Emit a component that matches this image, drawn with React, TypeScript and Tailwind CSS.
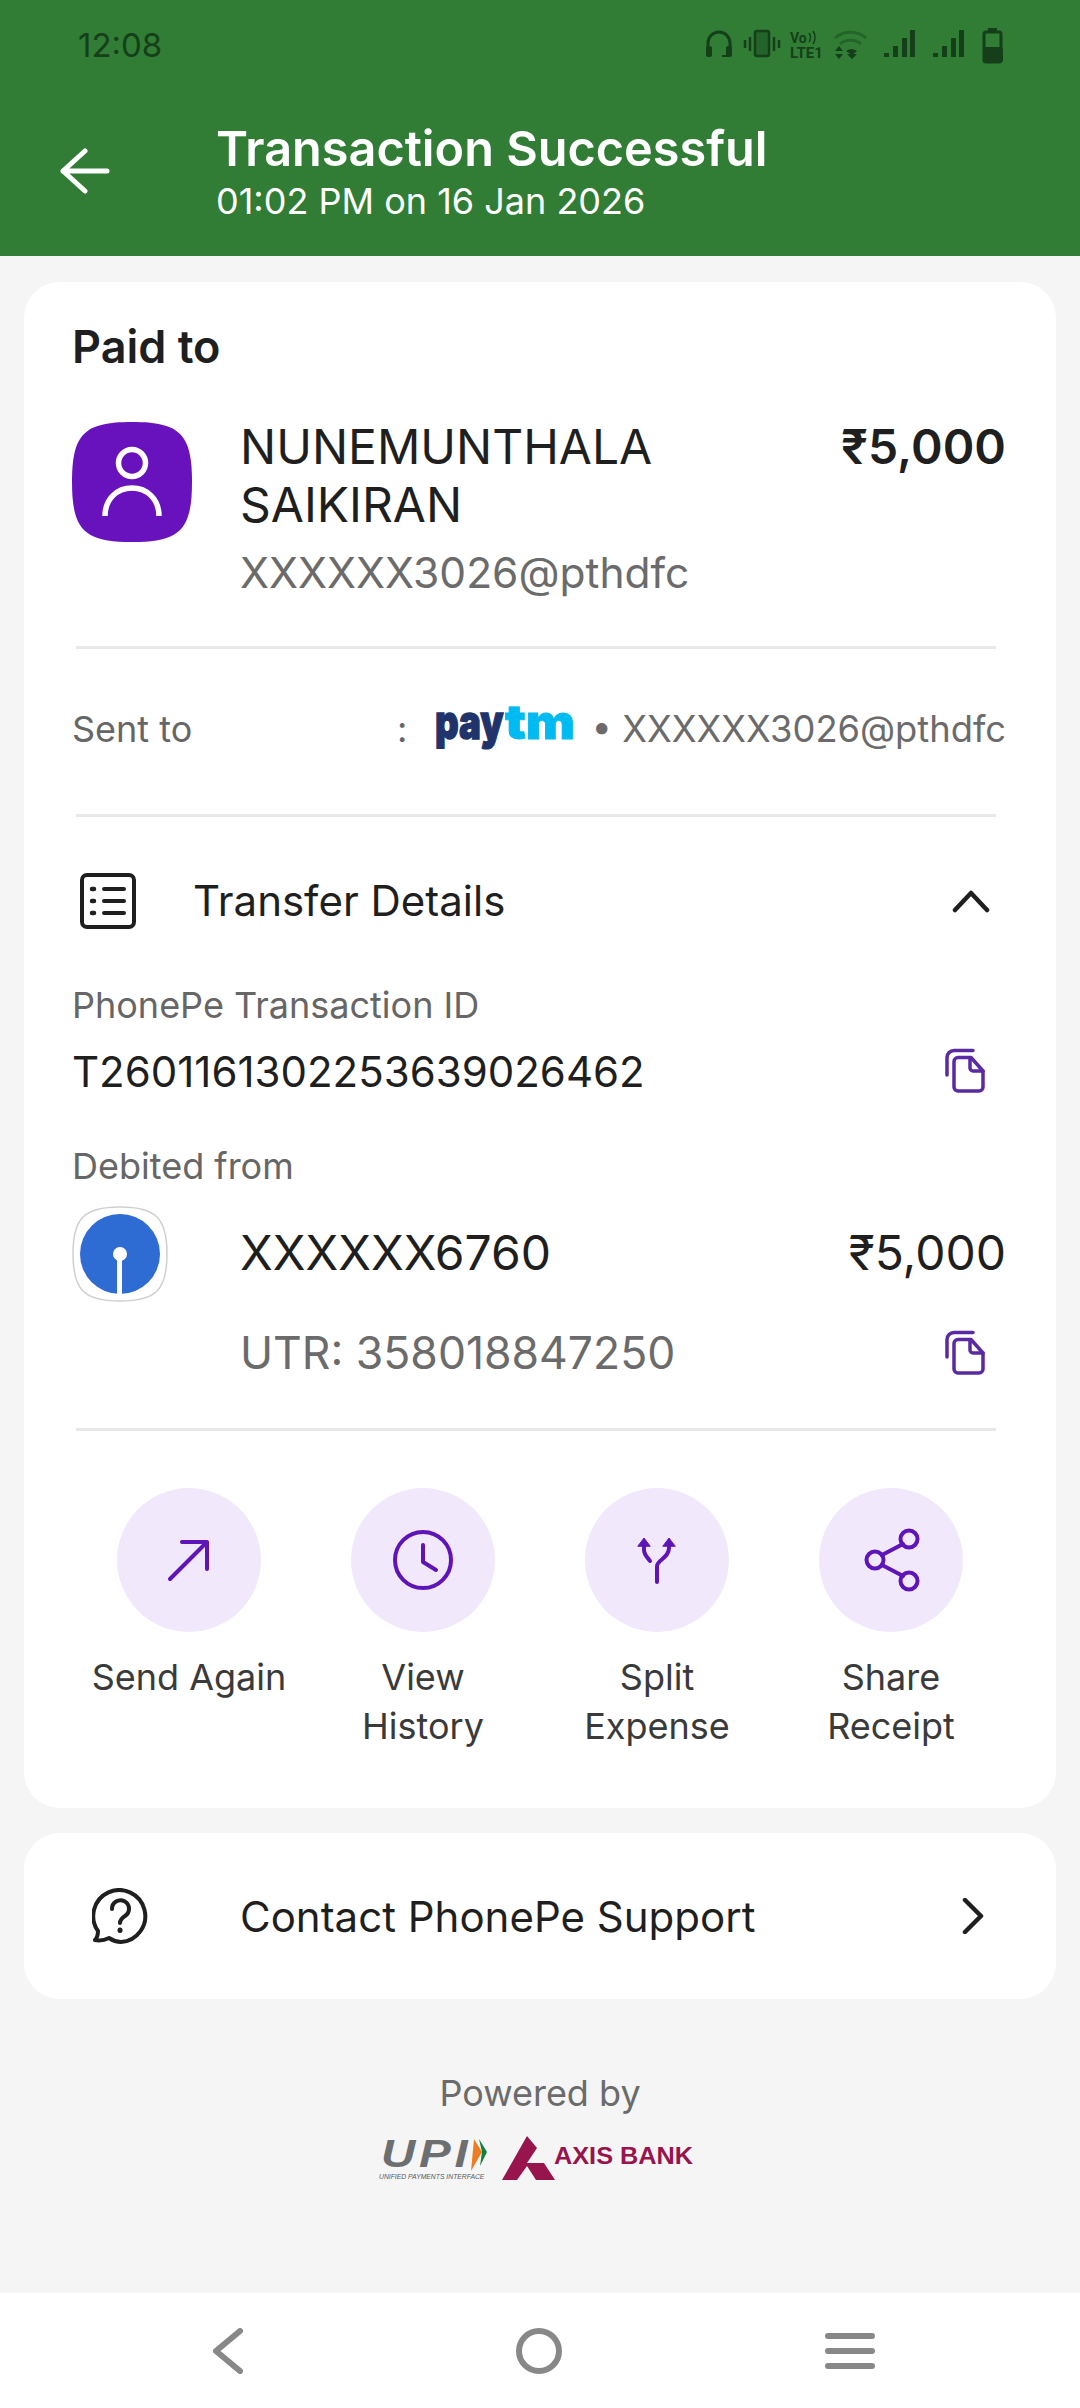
import React from 'react';

const PURPLE = '#5f14b8';

function StatusIcons() {
  return (
    <svg width="300" height="40" viewBox="0 0 300 40" fill="none">
      {/* headset */}
      <path d="M3 24V17a11 11 0 0 1 22 0v7" stroke="#153f18" strokeWidth="3" />
      <rect x="1" y="20" width="6" height="11" rx="2" fill="#153f18" />
      <rect x="21" y="20" width="6" height="11" rx="2" fill="#153f18" />
      <path d="M17 30h6" stroke="#153f18" strokeWidth="2" />
      {/* vibrate */}
      <rect x="50" y="5" width="14" height="25" rx="2" stroke="#153f18" strokeWidth="2.5" fill="#24632a" />
      <path d="M45 11v14M69 11v14M40 14v8M74 14v8" stroke="#153f18" strokeWidth="2.5" />
      {/* volte */}
      <text x="85" y="17" fontFamily="Roboto, sans-serif" fontWeight="700" fontSize="14" fill="#153f18">Vo</text>
      <path d="M104 7a8 8 0 0 1 0 9M108 5a12 12 0 0 1 0 13" stroke="#153f18" strokeWidth="1.5" />
      <text x="85" y="32" fontFamily="Roboto, sans-serif" fontWeight="700" fontSize="15" fill="#153f18">LTE1</text>
      {/* wifi */}
      <path d="M130 12a24 24 0 0 1 31 0" stroke="#24632a" strokeWidth="3" />
      <path d="M135 18a17 17 0 0 1 21 0" stroke="#24632a" strokeWidth="3" />
      <path d="M141 25a9 9 0 0 1 11 0l-5 4z" fill="#153f18" />
      <path d="M130 25l4-5 4 5zM130 28l4 5 4-5zM142 28h10l-5 5z" fill="#153f18" />
      {/* signal */}
      <g fill="#153f18">
        <rect x="179" y="27" width="5" height="4" />
        <rect x="188" y="20" width="5" height="11" />
        <rect x="197" y="12" width="5" height="19" />
        <rect x="205" y="4" width="5" height="27" />
        <rect x="228" y="27" width="5" height="4" />
        <rect x="237" y="20" width="5" height="11" />
        <rect x="246" y="12" width="5" height="19" />
        <rect x="254" y="4" width="5" height="27" />
      </g>
      {/* battery */}
      <rect x="283" y="2" width="9" height="4" fill="#153f18" />
      <rect x="279" y="6" width="17" height="30" rx="2" stroke="#153f18" strokeWidth="3" fill="none" />
      <rect x="278" y="21" width="20" height="15" rx="2" fill="#153f18" />
    </svg>
  );
}

function Divider() {
  return <div className="h-[3px] ml-[4px] mr-[10px] bg-[#e8e8e8]" />;
}

function CopyIcon() {
  return (
    <svg width="42" height="46" viewBox="0 0 42 46" fill="none" stroke="#5a2aa3" strokeWidth="3.5" strokeLinecap="round" strokeLinejoin="round">
      <path d="M29 2.5H10a7 7 0 0 0-7 7V27" />
      <path d="M14 9.5h13L39 23v16a4 4 0 0 1-4 4H14a4 4 0 0 1-4-4V13.5a4 4 0 0 1 4-4z" />
      <path d="M26 10v10a3 3 0 0 0 3 3h10" />
    </svg>
  );
}

function ActionButton({ lines, children }: { lines: string[]; children: React.ReactNode }) {
  return (
    <div className="flex flex-col items-center">
      <div className="w-[144px] h-[144px] rounded-full bg-[#f2e8fb] flex items-center justify-center">
        <svg width="72" height="72" viewBox="-36 -36 72 72" fill="none" stroke={PURPLE} strokeWidth="4" strokeLinecap="round" strokeLinejoin="round">
          {children}
        </svg>
      </div>
      <div className="mt-[21px] text-[36px] leading-[49px] text-[#3a3a3a] text-center">
        {lines.map((l) => (
          <div key={l}>{l}</div>
        ))}
      </div>
    </div>
  );
}

function PaytmLogo() {
  return (
    <svg width="140" height="46" viewBox="0 0 140 46" className="ml-[28px] overflow-visible">
      <text transform="translate(0 33) scale(1.02 1.32)" fontFamily="Inter, sans-serif" fontWeight="900" fontSize="36" stroke="#20336b" strokeWidth="1" fill="#20336b">
        pay
      </text>
      <text transform="translate(70 33) scale(1.45 1.32)" fontFamily="Inter, sans-serif" fontWeight="900" fontSize="36" stroke="#00baf2" strokeWidth="0.6" fill="#00baf2">
        tm
      </text>
    </svg>
  );
}

function PartnerLogos() {
  return (
    <svg width="320" height="54" viewBox="0 0 320 54" className="mt-[16px] mr-[6px] overflow-visible">
      <text transform="translate(4 36) scale(1.25 1)" fontFamily="Liberation Sans, sans-serif" fontStyle="italic" fontWeight="700" fontSize="38" letterSpacing="3" fill="#6d6e70">
        UPI
      </text>
      <polygon points="97,8 105,21 94,40" fill="#ed7d23" />
      <polygon points="102,8 110,21 103,35 105,21" fill="#127f3f" />
      <text x="2" y="48" fontFamily="Liberation Sans, sans-serif" fontStyle="italic" fontSize="6.800" fill="#58595b">
        UNIFIED PAYMENTS INTERFACE
      </text>
      <path d="M150 5L160 17 150 32H167L178 49H159L150 35 140 49H125Z" fill="#97144d" />
      <text transform="translate(177 33) scale(1.1 1)" fontFamily="Liberation Sans, sans-serif" fontWeight="700" fontSize="23" fill="#97144d">
        AXIS BANK
      </text>
    </svg>
  );
}

export default function App() {
  return (
    <div className="min-h-[2408px] flex flex-col bg-[#f5f5f5] font-['Inter',sans-serif] text-[#1f1f1f]">
      {/* Header */}
      <header className="h-[256px] bg-[#317d35]">
        <div className="h-[90px] flex items-center justify-between pl-[78px] pr-[75px] pt-[2px]">
          <span className="text-[33px] text-[#153f18]">12:08</span>
          <StatusIcons />
        </div>
        <div className="flex items-center pl-[60px] mt-[29px]">
          <svg width="50" height="46" viewBox="0 0 50 46" fill="none" stroke="#fff" strokeWidth="5" strokeLinecap="round" strokeLinejoin="round">
            <path d="M3 23h44M25 3L3 23l22 20" />
          </svg>
          <div className="ml-[106px] text-white">
            <div className="text-[48.600px] leading-[60px] font-semibold">Transaction Successful</div>
            <div className="text-[36px] leading-[44px]">01:02 PM on 16 Jan 2026</div>
          </div>
        </div>
      </header>

      <main className="flex-1">
        {/* Payment card */}
        <section className="mx-[24px] mt-[26px] bg-white rounded-[36px] pl-[48px] pr-[50px] pt-[45px] pb-[57px]">
          <div className="text-[45px] leading-[40px] font-semibold">Paid to</div>

          <div className="flex mt-[51px]">
            <svg width="120" height="120" viewBox="0 0 120 120" fill="none" className="mt-[4px] shrink-0">
              <path d="M60 0C108 0 120 12 120 60S108 120 60 120 0 108 0 60 12 0 60 0Z" fill="#6712bd" />
              <circle cx="60" cy="41" r="13.500" stroke="#fff" strokeWidth="5.500" />
              <path d="M33 94c0-17 12-28 27-28s27 11 27 28" stroke="#fff" strokeWidth="5.500" />
            </svg>
            <div className="ml-[48px] flex-1">
              <div className="flex justify-between">
                <div className="text-[48px] leading-[58px] w-[520px]">NUNEMUNTHALA SAIKIRAN</div>
                <div className="text-[48px] leading-[58px] font-semibold">₹5,000</div>
              </div>
              <div className="text-[42.500px] leading-[58px] mt-[10px] text-[#6b6b6b]">XXXXXX3026@pthdfc</div>
            </div>
          </div>

          <div className="mt-[44px]">
            <Divider />
          </div>

          <div className="flex items-center h-[44px] mt-[58px]">
            <span className="text-[36px] text-[#666] w-[325px]">Sent to</span>
            <span className="text-[36px] text-[#666]">:</span>
            <div className="flex-1 flex items-center justify-between">
              <PaytmLogo />
              <span className="text-[36.300px] text-[#6b6b6b]">• XXXXXX3026@pthdfc</span>
            </div>
          </div>

          <div className="mt-[63px]">
            <Divider />
          </div>

          <div className="flex items-center mt-[52px] pl-[8px] pr-[16px]">
            <svg width="56" height="56" viewBox="0 0 56 56" fill="none" stroke="#1f1f1f" strokeWidth="4" strokeLinecap="round">
              <rect x="2" y="2" width="52" height="52" rx="5" />
              <path d="M24 16h20M24 28h20M24 40h20" />
              <path d="M12 16h2M12 28h2M12 40h2" strokeWidth="4.500" />
            </svg>
            <span className="ml-[57px] flex-1 text-[42px]">Transfer Details</span>
            <svg width="38" height="24" viewBox="0 0 38 24" fill="none" stroke="#1f1f1f" strokeWidth="4.500" strokeLinecap="round" strokeLinejoin="round">
              <path d="M3 21L19 4l16 17" />
            </svg>
          </div>

          <div className="mt-[51px] text-[36px] leading-[44px] text-[#666]">PhonePe Transaction ID</div>
          <div className="flex items-center justify-between mt-[19px] h-[50px] pr-[20px]">
            <span className="text-[42px]">T2601161302253639026462</span>
            <CopyIcon />
          </div>

          <div className="mt-[48px] text-[36px] leading-[44px] text-[#666]">Debited from</div>
          <div className="flex mt-[18px]">
            <svg width="96" height="96" viewBox="0 0 96 96" fill="none" className="shrink-0">
              <path d="M48 1C84 1 95 12 95 48S84 95 48 95 1 84 1 48 12 1 48 1Z" stroke="#cfcfcf" strokeWidth="1.500" />
              <circle cx="48" cy="48" r="40" fill="#2e6bd3" />
              <circle cx="48" cy="48" r="7" fill="#fff" />
              <rect x="45" y="48" width="5" height="41" fill="#fff" />
            </svg>
            <div className="ml-[72px] flex-1 pt-[17px]">
              <div className="flex justify-between items-center h-[60px]">
                <span className="text-[48px]">XXXXXX6760</span>
                <span className="text-[48px]">₹5,000</span>
              </div>
              <div className="flex justify-between items-center h-[60px] mt-[40px] pr-[20px]">
                <span className="text-[44.500px] text-[#6b6b6b]">UTR: 358018847250</span>
                <CopyIcon />
              </div>
            </div>
          </div>

          <div className="mt-[45px]">
            <Divider />
          </div>

          {/* Actions */}
          <div className="grid grid-cols-4 w-[936px] mt-[57px]">
            <ActionButton lines={['Send Again']}>
              <path d="M-19 19L18-18M-7-18H18V9" />
            </ActionButton>
            <ActionButton lines={['View', 'History']}>
              <circle cx="0" cy="0" r="28" />
              <path d="M0-15V2L13 10" />
            </ActionButton>
            <ActionButton lines={['Split', 'Expense']}>
              <path d="M0 22V6C0 0 12 -2 12 -12V-16" />
              <path d="M-13-16V-10C-13-5-9-2-7 1" />
              <path d="M-19-14L-13-22-7-14ZM6-14L12-22 18-14Z" fill={PURPLE} strokeWidth="1" />
            </ActionButton>
            <ActionButton lines={['Share', 'Receipt']}>
              <circle cx="-16" cy="0" r="8.500" />
              <circle cx="18" cy="-21" r="8.500" />
              <circle cx="18" cy="21" r="8.500" />
              <path d="M-9-5L12-16M-9 5L12 16" />
            </ActionButton>
          </div>
        </section>

        {/* Support */}
        <section className="mx-[24px] mt-[25px] h-[166px] bg-white rounded-[36px] flex items-center pl-[68px] pr-[72px]">
          <svg width="56" height="56" viewBox="0 0 56 56" fill="none" stroke="#1f1f1f" strokeWidth="4" strokeLinecap="round" strokeLinejoin="round">
            <path d="M3 52c2-2 3-5 3-9A26 26 0 1 1 29 54c-5 0-9-2-12-4-4 2-9 3-14 2z" />
            <path d="M20 21a8.500 8.500 0 1 1 13 7c-3 2-5 4-5 7" />
            <path d="M28 42v.5" strokeWidth="5" />
          </svg>
          <span className="ml-[92px] flex-1 text-[42px]">Contact PhonePe Support</span>
          <svg width="22" height="36" viewBox="0 0 22 36" fill="none" stroke="#1f1f1f" strokeWidth="4.500" strokeLinecap="round" strokeLinejoin="round">
            <path d="M3 2l16 16L3 34" />
          </svg>
        </section>

        {/* Footer */}
        <div className="flex flex-col items-center mt-[72px]">
          <div className="text-[36px] leading-[44px] text-[#6b6b6b]">Powered by</div>
          <PartnerLogos />
        </div>
      </main>

      {/* Navigation bar */}
      <nav className="h-[115px] bg-white flex items-center pl-[178px] gap-[211px]">
        <svg width="100" height="46" viewBox="0 0 100 46" fill="none" stroke="#888" strokeWidth="6" strokeLinecap="round" strokeLinejoin="round">
          <path d="M62 3L38 23l24 20" />
        </svg>
        <svg width="100" height="46" viewBox="0 0 100 46" fill="none" stroke="#888" strokeWidth="6">
          <circle cx="50" cy="23" r="20" />
        </svg>
        <svg width="100" height="46" viewBox="0 0 100 46" fill="none" stroke="#888" strokeWidth="6" strokeLinecap="round">
          <path d="M28 8h44M28 23h44M28 38h44" />
        </svg>
      </nav>
    </div>
  );
}
